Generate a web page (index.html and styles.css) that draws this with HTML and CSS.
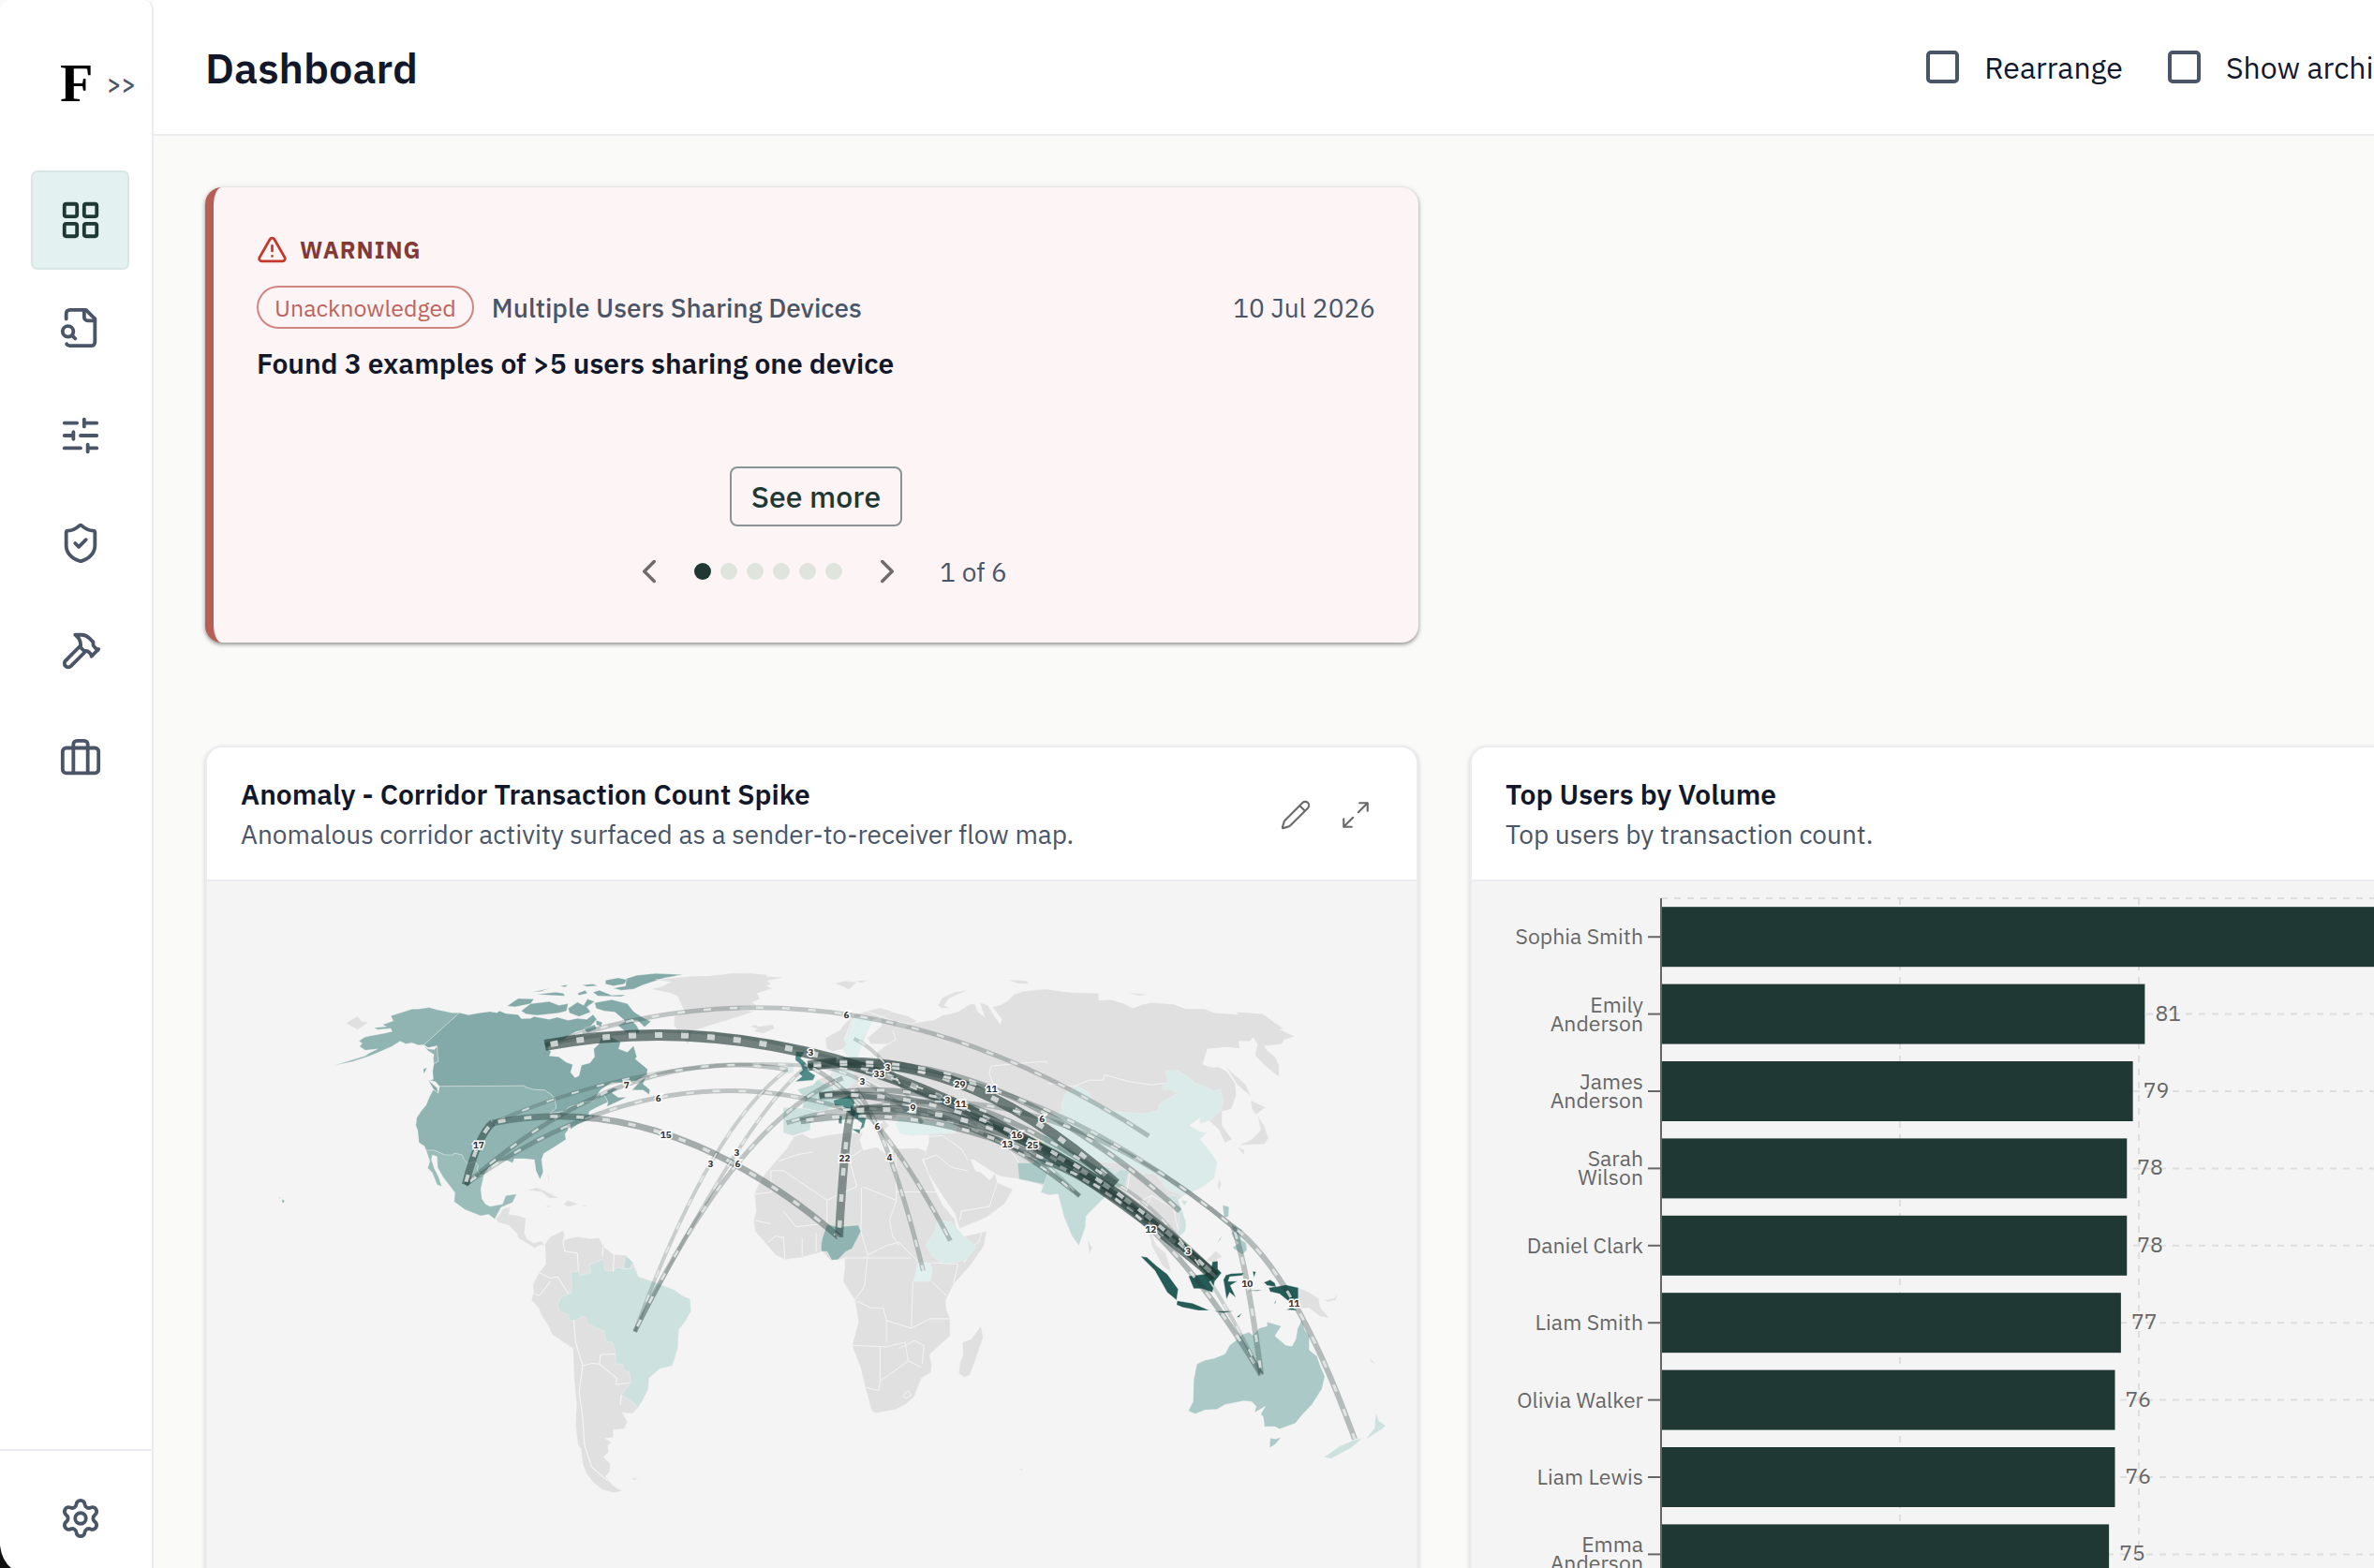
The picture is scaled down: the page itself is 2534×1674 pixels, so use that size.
FILE: index.html
```html
<!DOCTYPE html>
<html lang="en">

<head>
  <meta charset="utf-8">
  <meta name="viewport" content="width=device-width">
  <title>Dashboard</title>
  <link rel="stylesheet" href="styles.css">
</head>

<body>
  <div class="app">
    <aside class="sidebar">
      <div class="brand">
        <span class="logo">F</span>
        <button class="expand" aria-label="Expand menu">&gt;&gt;</button>
      </div>
      <nav class="nav">
        <a href="#" class="nav-item active" aria-label="Dashboard">
          <svg class="icon" viewBox="0 0 24 24"><rect x="3" y="3" width="7" height="7" rx="1"/><rect x="14" y="3" width="7" height="7" rx="1"/><rect x="14" y="14" width="7" height="7" rx="1"/><rect x="3" y="14" width="7" height="7" rx="1"/></svg>
        </a>
        <a href="#" class="nav-item" aria-label="Search files">
          <svg class="icon" viewBox="0 0 24 24"><path d="M14 2v4a2 2 0 0 0 2 2h4"/><path d="M4.268 21a2 2 0 0 0 1.727 1H18a2 2 0 0 0 2-2V7l-5-5H6a2 2 0 0 0-2 2v3"/><path d="m9 18-1.500-1.500"/><circle cx="5" cy="14" r="3"/></svg>
        </a>
        <a href="#" class="nav-item" aria-label="Rules">
          <svg class="icon" viewBox="0 0 24 24"><path d="M21 5h-7M10 5H3M21 12h-9M8 12H3M21 19h-5M12 19H3M14 3v4M8 10v4M16 17v4"/></svg>
        </a>
        <a href="#" class="nav-item" aria-label="Security">
          <svg class="icon" viewBox="0 0 24 24"><path d="M20 13c0 5-3.500 7.500-7.660 8.950a1 1 0 0 1-.67-.01C7.500 20.500 4 18 4 13V6a1 1 0 0 1 1-1c2 0 4.500-1.200 6.240-2.720a1.170 1.170 0 0 1 1.520 0C14.510 3.810 17 5 19 5a1 1 0 0 1 1 1z"/><path d="m9 12 2 2 4-4"/></svg>
        </a>
        <a href="#" class="nav-item" aria-label="Tools">
          <svg class="icon" viewBox="0 0 24 24"><path d="m15 12-8.373 8.373a1 1 0 1 1-3-3L12 9"/><path d="m18 15 4-4"/><path d="m21.500 11.500-1.914-1.914A2 2 0 0 1 19 8.172V7l-2.260-2.260a6 6 0 0 0-4.202-1.756L9 2.960l.92.820A6.180 6.180 0 0 1 12 8.400V10l2 2h1.172a2 2 0 0 1 1.414.586L18.500 14.500"/></svg>
        </a>
        <a href="#" class="nav-item" aria-label="Cases">
          <svg class="icon" viewBox="0 0 24 24"><path d="M16 20V4a2 2 0 0 0-2-2h-4a2 2 0 0 0-2 2v16"/><rect x="2" y="6" width="20" height="14" rx="2"/></svg>
        </a>
      </nav>
      <div class="sidebar-footer">
        <a href="#" class="nav-item" aria-label="Settings">
          <svg class="icon" viewBox="0 0 24 24"><path d="M9.671 4.136a2.340 2.340 0 0 1 4.659 0 2.340 2.340 0 0 0 3.319 1.915 2.340 2.340 0 0 1 2.330 4.033 2.340 2.340 0 0 0 0 3.831 2.340 2.340 0 0 1-2.330 4.033 2.340 2.340 0 0 0-3.319 1.915 2.340 2.340 0 0 1-4.659 0 2.340 2.340 0 0 0-3.320-1.915 2.340 2.340 0 0 1-2.330-4.033 2.340 2.340 0 0 0 0-3.831A2.340 2.340 0 0 1 6.350 6.051a2.340 2.340 0 0 0 3.319-1.915"/><circle cx="12" cy="12" r="3"/></svg>
        </a>
      </div>
      <svg class="corner" viewBox="0 0 12 24"><path d="M0 0Q2 16 12 24H0Z"/></svg>
    </aside>

    <div class="page">
      <header class="topbar">
        <h1>Dashboard</h1>
        <div class="options">
          <label class="option"><input type="checkbox"> Rearrange</label>
          <label class="option"><input type="checkbox"> Show archived</label>
        </div>
      </header>

      <main class="content">
        <section class="alert">
          <div class="alert-head">
            <svg class="alert-icon" viewBox="0 0 24 24"><path d="m21.730 18-8-14a2 2 0 0 0-3.480 0l-8 14A2 2 0 0 0 4 21h16a2 2 0 0 0 1.730-3M12 9v4M12 17h.01"/></svg>
            WARNING
          </div>
          <div class="alert-meta">
            <span class="pill">Unacknowledged</span>
            <span class="alert-type">Multiple Users Sharing Devices</span>
            <time>10 Jul 2026</time>
          </div>
          <h2>Found 3 examples of &gt;5 users sharing one device</h2>
          <button class="see-more">See more</button>
          <div class="pager">
            <button class="arrow" aria-label="Previous"><svg viewBox="0 0 24 24"><path d="m15 18-6-6 6-6"/></svg></button>
            <div class="dots"><i class="on"></i><i></i><i></i><i></i><i></i><i></i></div>
            <button class="arrow" aria-label="Next"><svg viewBox="0 0 24 24"><path d="m9 18 6-6-6-6"/></svg></button>
            <span class="count">1 of 6</span>
          </div>
        </section>

        <section class="card">
          <div class="card-head">
            <div>
              <h2>Anomaly - Corridor Transaction Count Spike</h2>
              <p>Anomalous corridor activity surfaced as a sender-to-receiver flow map.</p>
            </div>
            <div class="tools">
              <button aria-label="Edit"><svg viewBox="0 0 24 24"><path d="M21.174 6.812a1 1 0 0 0-3.986-3.987L3.842 16.174a2 2 0 0 0-.5.830l-1.321 4.352a.5.5 0 0 0 .623.622l4.353-1.320a2 2 0 0 0 .830-.497zM15 5l4 4"/></svg></button>
              <button aria-label="Full screen"><svg viewBox="0 0 24 24"><path d="M15 3h6v6M21 3l-7 7M3 21l7-7M9 21H3v-6"/></svg></button>
            </div>
          </div>
          <svg class="map" viewBox="221 941 1292 860">
            <!-- North America -->
            <g class="land" transform="translate(340 1020) scale(.33333)">
              <path class="c2" d="M452 184L428 184 400 178 380 174 355 167 320 172 300 172 270 182 232 194 240 210 205 222 218 228 178 232 190 238 232 234 236 244 210 250 165 258 148 262 130 275 140 282 132 292 150 304 190 300 162 314 150 322 52 352 110 340 165 322 190 312 235 292 262 275 280 284 300 280 320 288 338 287Z"/>
              <path class="c2" d="M338 287L350 300 372 302 380 290 384 340 370 348 368 330 370 318 350 305Z"/>
              <path class="c1" d="M452 184L480 191 520 184 550 180 572 184 580 178 600 186 640 190 650 203 680 202 690 196 740 205 765 198 800 208 830 202 860 205 880 190 892 205 865 235 825 245 800 258 788 270 745 280 735 300 745 308 740 322 770 325 795 343 815 350 808 375 822 392 835 386 843 352 870 345 885 325 882 300 898 285 905 265 935 260 968 278 962 300 990 310 1010 290 1020 325 1015 332 1055 365 1052 382 1020 402 970 408 940 408 905 430 890 452 945 425 960 428 940 440 960 455 988 455 925 484 928 470 915 447 900 450 880 467 850 470 832 477 800 488 790 500 765 503 740 507 762 490 758 460 745 445 725 432 690 430 662 422 660 418 388 420 375 405 355 400 368 398 366 370 370 348 384 340 380 290 352 296 338 287Z"/>
              <path class="c1" d="M1005 432L1030 405 1048 392 1040 412 1062 430 1060 446 1040 432ZM352 400L380 425 384 442 368 428ZM336 365L348 360 338 380Z"/>
              <path class="c1" d="M605 162L640 138 690 140 680 155 630 165ZM650 178L680 155 740 148 770 160 800 155 795 178 770 185 700 192 665 188ZM800 170L830 150 850 160 862 140 885 148 860 165 872 182 835 196 805 185ZM885 152L940 142 990 155 1010 180 1040 200 1065 212 1045 230 1025 210 1000 205 1020 225 1030 245 1010 255 985 245 960 225 985 212 950 182 915 178 890 170ZM685 118L740 106 712 116ZM700 125L760 118 785 122 790 130 740 128ZM845 95L880 92 895 98 860 100ZM830 122L855 112 862 122 835 128ZM900 112L940 128 984 126 970 132 895 130 880 118ZM920 80L960 72 990 78 980 92 945 98 920 92ZM985 75L1020 64 1080 58 1168 62 1110 72 1070 85 1040 95 1010 108 970 112 945 105 985 98ZM850 235L885 222 892 235 862 248ZM775 98L800 94 790 102ZM890 208L910 215 905 228 890 222Z"/>
              <path class="c2" d="M388 420L660 418 662 422 690 430 725 432 745 445 758 460 762 490 740 507 765 503 790 500 800 488 832 477 850 470 880 467 900 450 915 447 928 470 890 488 868 500 866 512 885 512 870 525 830 542 808 558 806 540 798 542 800 560 790 572 793 590 760 612 722 635 715 655 720 695 710 718 697 690 692 655 660 652 628 652 622 665 605 658 575 660 545 680 530 705 517 705 508 684 512 675 500 660 480 668 467 655 460 640 435 634 432 640 405 640 372 625 345 625 340 612 322 600 318 560 312 545 315 520 330 498 345 480 355 455 368 430 384 442Z"/>
              <path class="c3" d="M345 625L372 625 405 640 432 640 435 634 460 640 467 655 480 668 500 660 512 675 508 684 517 705 530 705 520 750 524 780 535 797 550 805 590 797 600 770 635 765 622 792 585 808 565 845 545 830 520 835 470 815 435 790 437 760 400 712 382 680 380 645 365 640 362 655 372 685 385 710 395 740 380 735 365 697 350 682 357 660Z"/>
              <path d="M568 845L582 828 590 812 615 806 610 830 640 834 665 842 660 890 668 910 690 922 715 916 725 930 712 928 692 938 665 920 640 905 636 892 610 865 575 855Z"/>
              <path d="M668 752L700 744 740 762 768 778 740 778 715 758ZM785 798L800 785 832 797 800 806ZM728 802L745 805 735 808ZM848 802L860 802 852 806ZM735 700L740 712 736 728ZM88 218L125 195 138 210 160 215 125 238Z"/>
              <path class="c2" d="M-116 782L-108 786 -112 794 -117 790ZM-126 775L-121 777 -125 779Z"/>
            </g>
            <!-- South America -->
            <g class="land" transform="translate(540 1300) scale(.38265 .33333)">
              <path d="M110 85L125 62 160 42 165 55 160 75 180 66 200 62 235 68 260 65 275 95 300 118 335 122 355 145 365 170 370 190 410 205 470 232 495 252 515 262 517 300 500 335 483 360 480 420 472 450 465 475 430 485 400 515 398 550 385 580 370 608 355 628 325 625 340 655 330 678 300 680 300 705 278 708 295 722 285 730 287 752 273 768 292 790 290 815 278 830 300 860 325 877 300 882 270 872 245 850 225 820 215 790 210 740 202 730 195 665 198 600 192 530 190 480 188 420 130 375 118 345 100 312 92 290 72 265 78 240 76 215 95 175 112 150Z"/>
              <path d="M350 836L372 836 360 842ZM1433 810L1438 804 1445 810Z"/>
              <path class="c6" d="M182 175L205 172 210 185 237 178 235 150 252 145 272 132 277 170 300 172 312 160 330 165 350 165 358 158 370 190 410 205 470 232 495 252 515 262 517 300 500 335 483 360 480 420 472 450 465 475 430 485 400 515 398 550 385 580 368 612 362 598 323 568 350 530 345 495 330 490 328 472 308 468 306 430 298 400 280 398 275 365 228 340 225 318 212 318 195 330 178 330 175 312 150 300 145 282 155 255 182 245 185 210Z"/>
              <path class="c5" d="M335 122L355 145 345 165 330 162Z"/>
              <path class="border" d="M160 75L165 108 200 115 203 170M272 95L270 125M303 118L300 172M95 178L125 195 145 190 175 245M78 245L95 250 125 205M190 330L195 400 215 475 240 468 262 470 265 440 305 438M262 470L310 515 308 535 345 530M323 568L320 600M215 475L205 560 215 640 220 730 240 800 285 845"/>
            </g>
            <!-- Europe, western Asia and Africa -->
            <g class="land" transform="translate(740 1020) scale(.33333)">
              <path d="M-135 108L-100 100 -70 85 -120 78 0 66 50 66 120 58 180 57 240 62 235 68 290 70 240 82 250 92 235 98 255 106 205 122 215 140 190 150 205 160 150 165 150 175 195 180 110 208 60 222 0 243 -15 285 -35 262 -60 225 -60 195 -25 185 -40 150 -50 130 -75 120Z"/>
              <path d="M182 228L200 222 210 228 255 222 262 234 225 250 195 244 205 235ZM455 90L485 82 525 86 500 110 480 100ZM520 82L562 80 540 88ZM785 160L800 135 840 118 878 112 850 125 820 138 805 160 825 170 795 168ZM1010 78L1070 82 1075 92 1040 90Z"/>
              <path d="M600 180L640 182 690 195 718 210 705 222 655 212 650 225 680 232 700 218 770 208 800 192 848 182 890 155 905 158 912 180 935 198 920 152 945 160 965 192 985 222 990 205 960 165 985 160 1010 145 1030 125 1060 115 1130 108 1180 118 1300 122V730L1210 760 1170 765 1140 768 1115 735 1045 717 985 708 950 688 900 655 890 655 905 690 925 697 950 720 968 700 975 728 1025 750 1000 795 940 840 855 875 838 825 800 770 755 700 738 650 755 605 757 575 700 578 665 570 650 540 665 520 740 525 790 520 800 500 760 480 700 470 660 490 650 520 615 530 628 545 605 570 590 545 560 515 530 485 510 470 480 485 430 495 400 500 378 530 375 560 320 578 290 568 290 488 350 490 360 460 335 430 385 415 400 398 440 385 450 360 480 362 470 345 485 330 495 360 560 358 590 335 590 310 625 285 570 284 560 265 605 225Z"/>
              <path d="M425 265L470 240 490 215 520 190 560 178 600 168 640 180 600 200 575 205 560 240 540 290 525 330 500 335 480 300 450 308 428 300Z"/>
              <path d="M325 580L350 572 380 588 440 575 480 570 545 568 535 590 545 625 590 615 625 642 650 620 720 618 750 628 735 655 750 690 775 750 800 800 838 845 845 880 860 902 941 885 933 930 892 990 835 1055 810 1105 812 1135 824 1165 824 1220 790 1250 758 1280 765 1310 763 1337 732 1355 709 1415 680 1440 651 1455 588 1467 573 1460 554 1390 537 1320 510 1250 531 1175 519 1105 481 1045 487 1000 487 970 470 975 440 976 415 950 350 968 295 975 265 960 235 925 200 885 195 850 203 820 198 765 210 735 235 695 270 655 300 620Z"/>
              <path d="M923 1188L930 1225 904 1300 887 1345 870 1352 852 1340 855 1310 866 1280 864 1240 892 1230Z"/>
              <path class="border" d="M200 765L250 760 250 690 290 690 430 785M275 660L330 640 385 630M430 785L525 740 500 650 490 600M650 625L652 758 780 758M545 742L652 785 652 758M290 820L330 870 420 860M430 785L430 860M540 745V820L538 885M652 785L630 850 640 900 660 930M538 885L560 960 620 930 660 920 720 980M487 970H560L700 970M560 960L550 1060 519 1105M290 900L295 975M240 920L265 900 290 905M350 905V965M395 890V950M250 860L200 850M525 1108L570 1130 610 1130 620 1170M620 1170L700 1195 705 1045M700 1195L760 1165 824 1165M510 1250L620 1255 680 1240 690 1300 600 1365V1255M600 1365L595 1395 554 1385M690 1300L730 1320M660 1260L710 1235 740 1250 735 1310M620 1170V1240M765 985L850 990 835 1050M765 1045L812 1090M925 890L915 920 892 935 870 985M675 1410L690 1395 700 1410 680 1420Z"/>
              <path class="border" d="M500 650L540 625M757 580L800 578 860 620 880 655M740 655L780 640 830 680 880 690M855 850L860 820 950 805 975 730M940 590L1000 600 1045 665M860 540L900 560M950 380L955 355 1060 345 1130 340 1200 400 1260 440M950 380L975 440 1050 460M570 285L590 330 640 345 660 400M525 410L560 400 600 420M640 240L650 270 625 285M515 195L485 270M560 180L640 210"/>
              <path class="c9" d="M330 308L358 310 345 330 362 345 372 372 392 385 385 400 328 405 350 388 340 378 352 368 345 350 328 335Z"/>
              <path class="c7" d="M303 352L322 346 322 375 300 380Z"/>
              <path class="c5" d="M335 430L385 415 400 398 425 412 455 430 452 480 430 495 400 500 350 488 360 460Z"/>
              <path class="c7" d="M445 366L515 370 515 410 490 430 452 430Z"/>
              <path class="c6" d="M290 488L350 490 405 502 378 530 375 560 320 578 290 568Z"/>
              <path class="c9" d="M450 465L500 450 520 468 512 492 555 522 548 550 535 560 542 538 500 506 480 482 455 482ZM508 556L537 558 534 572ZM467 512L478 516 477 540 467 538Z"/>
              <path class="c8" d="M515 200L545 195 578 210 560 240 545 262 540 290 525 335 500 335 482 300 492 285 485 270 505 235Z"/>
              <path class="c8" d="M650 540L665 522 740 528 850 540 840 570 757 573 700 578 665 572Z"/>
              <path class="c2" d="M411 925L415 905 430 862 465 870 530 865 538 885 510 940 490 950 465 975 445 977 430 950 411 948Z"/>
              <path class="c7" d="M785 850L830 855 868 900 908 935 870 980 800 988 765 962 746 930 775 885Z"/>
              <path class="c8" d="M720 985L760 985 767 1005 760 1045 707 1045 715 1015Z"/>
              <path class="c4" d="M1040 665L1090 665 1120 640 1140 610 1125 575 1165 605 1180 640 1150 690 1140 735 1115 732 1045 717Z"/>
            </g>
            <!-- Eastern Asia -->
            <g class="land" transform="translate(1120 1020) scale(.33333)">
              <path class="seamless" d="M-2 110L80 122 65 138 140 146 200 143 240 155 270 170 300 158 330 152 400 157 440 172 500 172 530 185 610 190 600 182 685 188 752 235 740 237 787 260 755 270 745 285 690 290 700 305 725 325 738 352 738 390 690 350 662 320 670 285 655 262 645 275 608 275 612 298 570 294 508 300 493 350 525 360 545 358 570 372 597 410 600 450 585 492 555 500 555 545 587 590 565 600 545 558 515 530 485 540 485 520 450 545 485 565 505 568 485 590 525 640 540 665 530 715 490 745 430 770 410 790 440 850 438 885 410 908 400 890 380 862 350 855 330 895 345 930 375 955 392 1012 372 1000 345 945 326 910 315 860 270 800 240 770 215 745 180 730 -2 700Z"/>
              <path class="c7" d="M375 370L410 368 440 385 470 410 500 420 530 435 550 428 560 465 550 500 515 530 485 540 485 520 450 545 485 565 505 568 485 590 525 640 540 665 530 715 490 745 430 770 380 750 340 700 300 700 260 670 150 660 60 600 20 560 -15 520 45 500 40 475 55 440 90 418 130 440 140 465 165 475 210 500 305 508 350 497 355 475 415 442 390 430 365 430 367 410 383 408Z"/>
              <path class="c5" d="M-20 570L20 580 60 610 150 672 250 690 262 672 245 740 215 745 170 785 120 835 118 870 97 930 75 900 50 840 30 765 0 768 -25 760 0 690Z"/>
              <path class="c6" d="M380 770L410 770 430 825 441 865 436 885 410 905 420 870 418 830ZM425 785L445 788 435 802Z"/>
              <path class="border" d="M-2 410L80 420 130 400 175 400 180 383 260 405 330 415 365 410M260 700L250 760 290 790 330 770 400 810 415 880M330 770L300 830"/>
              <path d="M648 465L695 487 665 510 652 495ZM670 515L690 545 704 585 692 605 612 608 650 590 680 560ZM605 615L628 625 625 640ZM570 360L632 415 648 452 605 415ZM548 716L553 735 545 752 541 738ZM125 912L140 938 130 956ZM195 685L228 688 215 700ZM255 120L320 125 290 130Z"/>
              <path class="c4" d="M558 800L578 806 576 838 562 840ZM585 862L620 880 610 900 595 890ZM590 935L615 920 632 920 635 940 622 960ZM540 920L556 896 550 912Z"/>
            </g>
            <!-- Oceania -->
            <g class="land" transform="translate(1180 1240) scale(.33333)">
              <path d="M148 245L170 285 200 310 212 355 185 335 150 270ZM325 318L355 288 376 305 345 325ZM620 405L655 420 685 440 690 468 718 502 690 497 655 470 620 472ZM702 445L735 440 744 425 740 445 715 450ZM845 628L868 650 855 645Z"/>
              <path class="c10" d="M115 305L135 308 165 335 200 362 235 410 230 445 200 420 180 385 160 350ZM232 447L280 455 300 463 335 478 300 478 250 468 230 460ZM268 368L320 362 340 345 345 322 362 320 362 345 374 358 352 385 345 420 310 408 285 408ZM380 380L388 365 405 360 445 358 440 366 400 370 395 385 425 384 402 398 420 437 400 420 390 442 385 410ZM510 388L530 380 545 390 548 402 580 396 620 405 620 465 600 458 560 425 530 418 525 405 545 402 520 398ZM582 476L600 468 616 478ZM474 352L484 355 478 372ZM350 480L412 480 380 486ZM365 488L390 496 370 492ZM422 500L440 486 430 500ZM455 415L505 412 490 416ZM543 455L550 443 546 456Z"/>
              <path class="c4" d="M295 650L320 638 350 632 385 618 400 590 425 570 440 555 462 548 475 558 495 535 520 528 520 515 565 528 545 560 580 590 600 593 612 570 618 535 632 508 640 540 655 560 655 605 680 625 690 655 705 690 695 730 665 778 635 810 610 840 560 858 545 850 512 850 508 820 500 810 515 785 480 805 485 785 470 770 445 768 385 780 360 795 320 797 290 810 268 800 283 770 285 700Z"/>
              <path class="c4" d="M530 888L548 890 565 885 545 908 528 918ZM405 230L430 215 440 228 435 250 452 262 455 285 440 298 410 278 430 262 415 250Z"/>
              <path class="c6" d="M868 806L878 832 900 848 882 862 835 892 865 855ZM825 888L790 918 725 953 703 948 755 912 800 893Z"/>
            </g>
            <g id="arcs"></g>
            <g id="arc-labels"></g>
          </svg>
        </section>

        <section class="card">
          <div class="card-head">
            <div>
              <h2>Top Users by Volume</h2>
              <p>Top users by transaction count.</p>
            </div>
          </div>
          <svg class="chart" id="chart" height="860"></svg>
        </section>
      </main>
    </div>
  </div>

  <script src="script.js"></script>
</body>

</html>
```
FILE: styles.css
```css
* {
  box-sizing: border-box;
}

html,
body {
  height: 100%;
  margin: 0;
  overflow: hidden;
}

body {
  font-family: "IBM Plex Sans", Roboto, sans-serif;
  font-size: 28px;
  color: #12182a;
  background-color: #fafaf8;
}

h1,
h2,
p {
  margin: 0;
}

button {
  font-family: inherit;
  color: inherit;
  padding: 0;
  border: none;
  background: none;
  cursor: pointer;
}

svg {
  display: block;
}

.app {
  display: flex;
  width: 115vw;
  height: 100vh;
}

/* Sidebar */
.sidebar {
  position: relative;
  display: flex;
  flex-direction: column;
  flex: none;
  width: 164px;
  background-color: #fff;
  border-right: 2px solid #ebebf0;
  border-radius: 12px 10px 0 0;
}

.brand {
  display: flex;
  align-items: center;
  gap: 18px;
  height: 178px;
  margin-bottom: 4px;
  padding-left: 64px;
}

.logo {
  font-family: "Liberation Serif", serif;
  font-size: 58px;
  font-weight: 700;
  line-height: 60px;
  width: 32px;
  color: #000;
}

.expand {
  font-size: 26px;
  font-weight: 500;
  color: #4a5568;
}

.nav {
  display: flex;
  flex-direction: column;
  gap: 9px;
  padding: 0 24px 0 33px;
}

.nav-item {
  display: flex;
  align-items: center;
  justify-content: center;
  height: 106px;
  border: 2px solid transparent;
  border-radius: 7px;
  color: #4a5568;
}

.nav-item.active {
  color: #203834;
  background-color: #e4f1f1;
  border-color: #d8e7e6;
}

.icon {
  width: 46px;
  height: 46px;
}

.icon,
.alert-icon,
.arrow svg,
.tools svg {
  fill: none;
  stroke: currentColor;
  stroke-width: 2;
  stroke-linecap: round;
  stroke-linejoin: round;
}

.sidebar-footer {
  margin-top: auto;
  height: 127px;
  padding: 19px 24px 0 33px;
  border-top: 2px solid #ebebf0;
}

.corner {
  position: absolute;
  left: 0;
  bottom: 0;
  width: 12px;
  height: 24px;
  fill: #111;
}

/* Top bar */
.page {
  flex: 1;
  min-width: 0;
}

.topbar {
  display: flex;
  align-items: center;
  justify-content: space-between;
  height: 145px;
  padding: 0 329px 0 55px;
  background-color: #fff;
  border-bottom: 2px solid #ebebf0;
}

.topbar h1 {
  font-size: 45px;
  font-weight: 600;
}

.options {
  display: flex;
  gap: 48px;
}

.option {
  display: flex;
  align-items: center;
  gap: 27px;
  font-size: 32px;
  white-space: nowrap;
}

.option input {
  appearance: none;
  width: 35px;
  height: 35px;
  margin: 0;
  border: 4px solid #4a5568;
  border-radius: 5px;
}

/* Content grid */
.content {
  display: grid;
  grid-template-columns: 1fr 1fr;
  column-gap: 55px;
  row-gap: 110px;
  padding: 55px 50px 55px 55px;
}

.alert {
  grid-column: 1;
  display: flex;
  flex-direction: column;
  height: 486px;
  padding: 47px 46px 48px 46px;
  background-color: #fdf4f5;
  border-left: 9px solid #b75f57;
  border-radius: 18px;
  box-shadow: 0 2px 4px rgba(0, 0, 0, .4), 0 0 10px rgba(0, 0, 0, .06);
}

.alert-head {
  display: flex;
  align-items: center;
  gap: 13px;
  height: 38px;
  font-size: 25px;
  font-weight: 700;
  letter-spacing: 1px;
  color: #823a36;
}

.alert-icon {
  width: 33px;
  height: 33px;
  color: #c5392c;
}

.alert-meta {
  display: flex;
  align-items: center;
  gap: 19px;
  height: 46px;
  margin-top: 20px;
  color: #4a5568;
}

.pill {
  height: 46px;
  padding: 0 17px;
  border: 2px solid #cf8780;
  border-radius: 23px;
  font-size: 25px;
  line-height: 44px;
  color: #be635b;
}

.alert-type {
  font-weight: 500;
}

.alert-meta time {
  margin-left: auto;
}

.alert h2,
.card h2 {
  font-size: 30px;
  font-weight: 600;
  line-height: 42px;
}

.alert h2 {
  margin-top: 16px;
}

.see-more {
  align-self: center;
  height: 64px;
  margin-top: 89px;
  padding: 0 21px;
  border: 2px solid #8b9494;
  border-radius: 8px;
  font-size: 32px;
  font-weight: 500;
  color: #203834;
}

.pager {
  display: flex;
  align-items: center;
  justify-content: center;
  gap: 22px;
  margin-top: 21px;
  color: #4a5568;
}

.arrow {
  display: flex;
  align-items: center;
  justify-content: center;
  width: 52px;
  height: 54px;
  color: #6f6b6b;
}

.arrow svg {
  width: 42px;
  height: 42px;
}

.dots {
  display: flex;
  gap: 10px;
}

.dots i {
  width: 18px;
  height: 18px;
  border-radius: 50%;
  background-color: #dfe4dc;
}

.dots .on {
  background-color: #203834;
}

.count {
  padding-left: 8px;
}

/* Cards */
.card {
  grid-row: 2;
  background-color: #f4f4f4;
  border: 2px solid #ebebf0;
  border-radius: 18px;
  box-shadow: 0 2px 5px rgba(0, 0, 0, .18);
  overflow: hidden;
}

.card-head {
  display: flex;
  align-items: center;
  justify-content: space-between;
  height: 143px;
  padding: 2px 48px 0 36px;
  background-color: #fff;
  border-bottom: 2px solid #ebebf0;
}

.card-head p {
  line-height: 44px;
  color: #4a5568;
}

.tools {
  display: flex;
  gap: 30px;
  color: #6b6b6b;
}

.tools svg {
  width: 34px;
  height: 34px;
  stroke-width: 1.5;
}

/* Flow map */
.map {
  width: 100%;
}

.land path {
  fill: #e0e0e0;
  stroke: #f4f4f4;
  stroke-width: 1;
  stroke-linejoin: round;
}

.land .seamless {
  stroke: none;
}

.land .border {
  fill: none;
  stroke-width: 3;
}

.land .c1 { fill: #83a9a8; }
.land .c2 { fill: #8fb4b2; }
.land .c3 { fill: #9bbdb9; }
.land .c4 { fill: #abc9c7; }
.land .c5 { fill: #c3dcd9; }
.land .c6 { fill: #cde1de; }
.land .c7 { fill: #dbebe9; }
.land .c8 { fill: #e0f0ee; }
.land .c9 { fill: #4f8c88; }
.land .c10 { fill: #255c57; }

.arc {
  fill: none;
  stroke: #203834;
}

.arc-dash {
  fill: none;
  stroke: #eef1f0;
  stroke-opacity: .75;
  stroke-dasharray: 8 20;
  stroke-dashoffset: -6;
}

.arc-label {
  font-size: 10px;
  font-weight: 700;
  text-anchor: middle;
  fill: #333;
  stroke: #fff;
  stroke-width: 3px;
  paint-order: stroke;
}

/* Bar chart */
.chart {
  width: 100%;
}

.chart text {
  font-size: 23px;
  fill: #666;
}

.chart .label {
  text-anchor: end;
}

.chart .grid {
  stroke: #dedede;
  stroke-width: 2;
  stroke-dasharray: 7 7;
}

.chart .axis {
  stroke: #666;
  stroke-width: 2;
}

.chart .bar {
  fill: #203834;
}
```
FILE: script.js
```js
const NS = 'http://www.w3.org/2000/svg';

function add(parent, tag, attrs, text) {
  const el = document.createElementNS(NS, tag);
  for (const key in attrs) {
    el.setAttribute(key, attrs[key]);
  }
  if (text !== undefined) {
    el.textContent = text;
  }
  parent.appendChild(el);
  return el;
}

// Where each country's corridors start and end on the map
const places = {
  ca: [582, 1116],
  us: [526, 1199],
  mx: [497, 1265],
  br: [678, 1422],
  ie: [841, 1142],
  gb: [863, 1138],
  fr: [875, 1170],
  es: [855, 1197],
  pt: [840, 1199],
  de: [900, 1151],
  it: [909, 1186],
  at: [914, 1163],
  se: [912, 1109],
  tr: [985, 1199],
  ng: [896, 1321],
  et: [1015, 1325],
  ug: [986, 1357],
  pk: [1111, 1240],
  india: [1153, 1277],
  bd: [1192, 1264],
  vn: [1260, 1293],
  cn: [1227, 1213],
  ph: [1317, 1310],
  id: [1298, 1363],
  au: [1347, 1468],
  nz: [1447, 1537]
};

// from, to, midpoint x, midpoint y, width, opacity, count
const corridors = [
  ['ca', 'cn', 904, 1083, 5, .26, 6],
  ['ca', 'india', 866, 1123, 4, .2, 3],
  ['ca', 'id', 939, 1146, 12, .62, 33],
  ['us', 'gb', 695, 1147, 4, .2],
  ['mx', 'ie', 669, 1158, 5, .26, 7],
  ['mx', 'it', 703, 1172, 5, .26, 6],
  ['us', 'ng', 711, 1211, 7, .38, 15],
  ['us', 'mx', 511, 1222, 8, .5, 17],
  ['br', 'ie', 759, 1242, 4, .2, 3],
  ['br', 'gb', 787, 1230, 4, .2, 3],
  ['br', 'de', 788, 1242, 5, .26, 6],
  ['gb', 'bd', 1025, 1157, 11, .6, 29],
  ['gb', 'vn', 1059, 1162, 6, .32, 11],
  ['se', 'tr', 948, 1139, 4, .2, 3],
  ['gb', 'tr', 921, 1154, 4, .2, 3],
  ['gb', 'india', 1012, 1174, 4, .2, 3],
  ['fr', 'bd', 1026, 1178, 6, .34, 11],
  ['fr', 'pk', 975, 1182, 6, .3, 9],
  ['gb', 'et', 937, 1202, 5, .28, 6],
  ['at', 'ug', 950, 1235, 5, .26, 4],
  ['it', 'ng', 902, 1236, 9, .5, 22],
  ['it', 'ph', 1113, 1194, 5, .25, 6],
  ['gb', 'ph', 1090, 1174, 5, .25],
  ['pt', 'india', 996, 1192, 5, .25],
  ['es', 'id', 1076, 1221, 7, .36, 13],
  ['it', 'id', 1103, 1222, 10, .5, 25],
  ['fr', 'id', 1086, 1211, 8, .42, 16],
  ['pk', 'au', 1229, 1312, 6, .32, 12],
  ['bd', 'au', 1269, 1335, 4, .2, 3],
  ['ph', 'au', 1332, 1370, 6, .28, 10],
  ['ph', 'nz', 1382, 1391, 6, .3, 11]
];

const arcs = document.getElementById('arcs');
const arcLabels = document.getElementById('arc-labels');

corridors.forEach(([from, to, mx, my, width, opacity, count]) => {
  const [x1, y1] = places[from];
  const [x2, y2] = places[to];
  const cx = 2 * mx - (x1 + x2) / 2;
  const cy = 2 * my - (y1 + y2) / 2;
  const d = `M${x1} ${y1}Q${cx} ${cy} ${x2} ${y2}`;
  add(arcs, 'path', { class: 'arc', d, 'stroke-width': width, 'stroke-opacity': opacity });
  add(arcs, 'path', { class: 'arc-dash', d, 'stroke-width': Math.max(2, width * .5) });
  if (count) {
    add(arcLabels, 'text', { class: 'arc-label', x: mx, y: my + 4 }, count);
  }
});

const users = [
  ['Sophia Smith', 157],
  ['Emily\nAnderson', 81],
  ['James\nAnderson', 79],
  ['Sarah\nWilson', 78],
  ['Daniel Clark', 78],
  ['Liam Smith', 77],
  ['Olivia Walker', 76],
  ['Liam Lewis', 76],
  ['Emma\nAnderson', 75]
];

const chart = document.getElementById('chart');
const left = 202;
const plotTop = 18;
const band = 82.4;
const unit = 6.375;

add(chart, 'line', { class: 'grid', x1: left, x2: '100%', y1: plotTop, y2: plotTop });
[40, 80, 120, 160].forEach(v => {
  const x = left + v * unit;
  add(chart, 'line', { class: 'grid', x1: x, x2: x, y1: plotTop, y2: '100%' });
});

users.forEach(([name, value], i) => {
  const y = plotTop + band * (i + .5);
  add(chart, 'line', { class: 'grid', x1: left, x2: '100%', y1: y, y2: y });
  add(chart, 'line', { class: 'axis', x1: left - 14, x2: left, y1: y, y2: y });
  add(chart, 'rect', { class: 'bar', x: left, y: y - 32, width: value * unit, height: 64 });
  add(chart, 'text', { x: left + value * unit + 11, y: y + 7 }, value);

  const lines = name.split('\n');
  lines.forEach((line, n) => {
    const offset = lines.length > 1 ? n * 20 - 2 : 8;
    add(chart, 'text', { class: 'label', x: left - 19, y: y + offset }, line);
  });
});

add(chart, 'line', { class: 'axis', x1: left, x2: left, y1: plotTop, y2: '100%' });
```
